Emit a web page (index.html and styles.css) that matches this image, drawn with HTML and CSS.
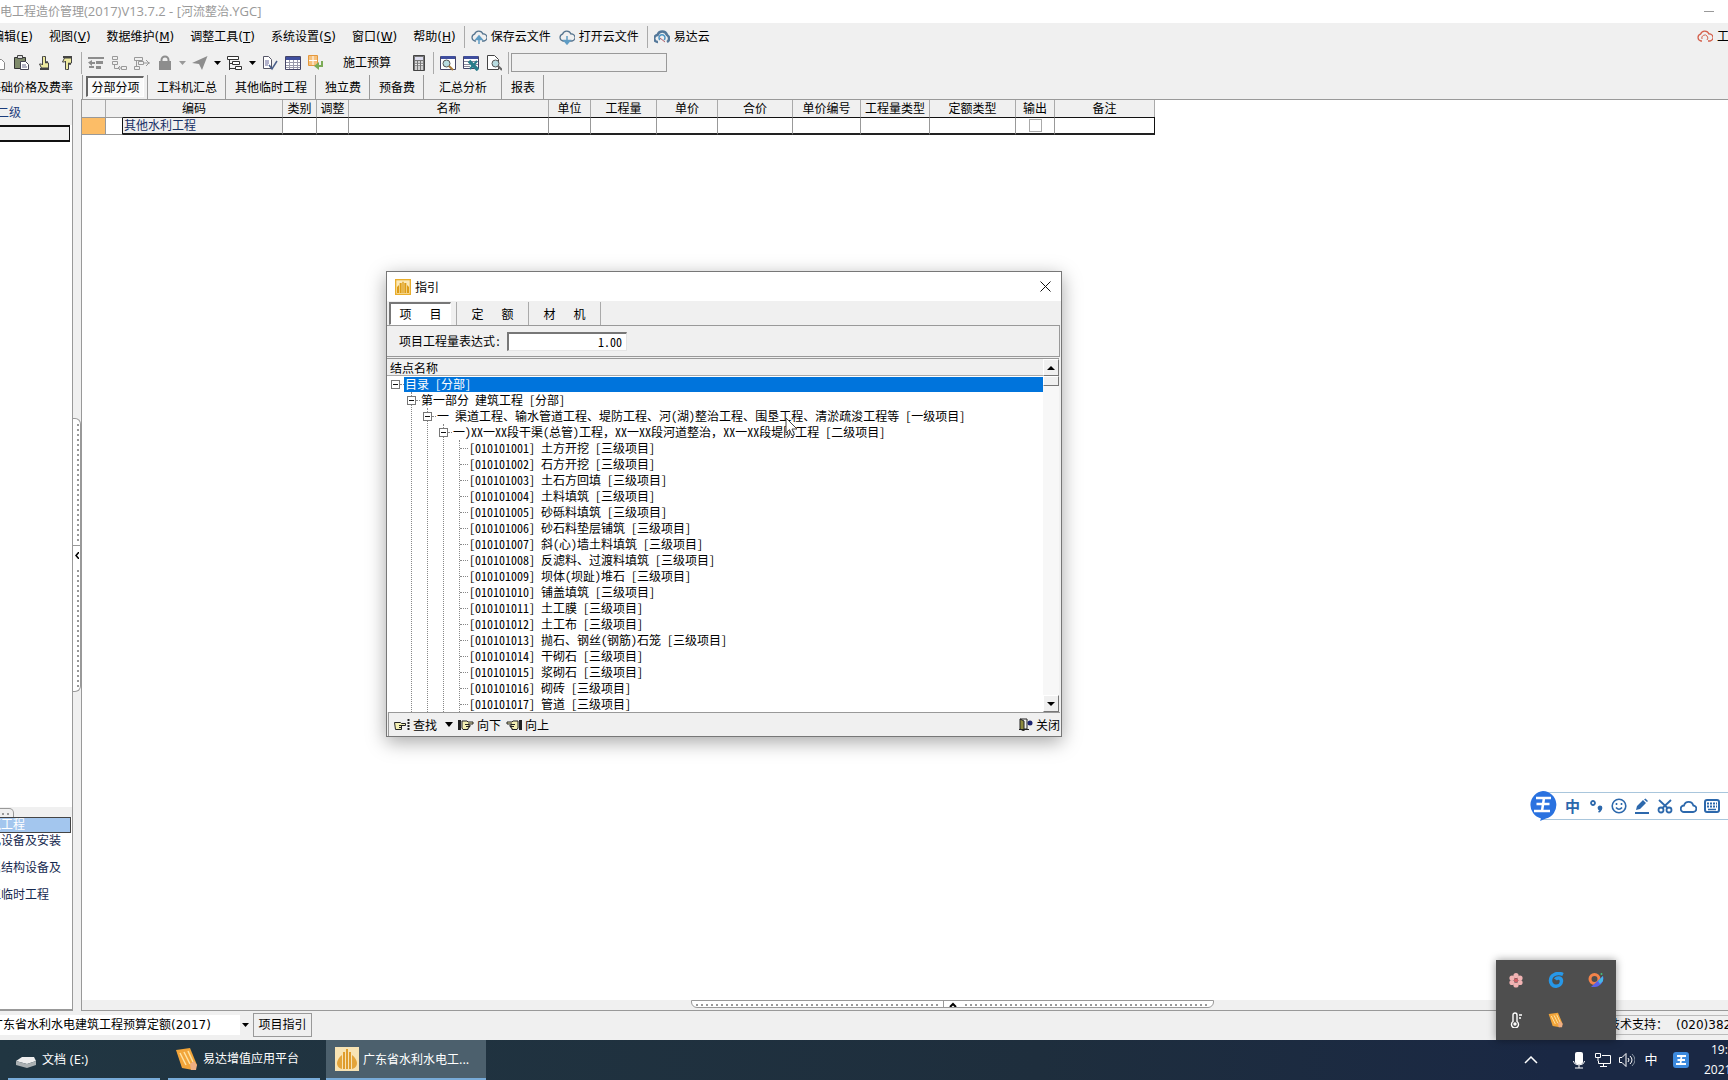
FILE: index.html
```html
<!DOCTYPE html>
<html lang="zh-CN">
<head>
<meta charset="utf-8">
<title>水利水电工程造价管理(2017)V13.7.2 - [河流整治.YGC]</title>
<link rel="stylesheet" href="styles.css">
</head>
<body>
<svg class="defs" aria-hidden="true">
  <symbol id="cloud" viewBox="0 0 16 16"><path d="M5 12H4a3.500 3.500 0 0 1-.5-6.800A4.500 4.500 0 0 1 12 5a3.500 3.500 0 0 1 1 7h-2" fill="none" stroke="currentColor" stroke-width="1.300"/></symbol>
  <symbol id="hand" viewBox="0 0 16 12"><path d="M0 1h3v10H0z" fill="#222"/><path d="M4 2h5l1 1h5v2h-5v1h2v1.500h-1V9h-1v1.500H5L4 9z" fill="#f4f0b4" stroke="#222"/><path d="M7 5.500h4M8 7.500h3" stroke="#222"/></symbol>
  <symbol id="point" viewBox="0 0 14 16"><path d="M6.500 1.500h2V8h1V6.500h1V8h1v5h-7l-2-4h2l1 1V1.500z" fill="#eeeaa0" stroke="#444"/><path d="M3 13h9v2H3z" fill="#444"/></symbol>
  <symbol id="logo" viewBox="0 0 24 24"><path d="M0 0h24v24H0z" fill="#f7e3b4"/><path d="M7 8v14c-4-1-5-4-5-6s2-6 5-8zM17 8v14c4-1 5-4 5-6s-2-6-5-8z" fill="#e3a43a"/><path d="M8 5h2v17H8zM11 2h2v20h-2zM14 5h2v17h-2z" fill="#df9c2d"/></symbol>
  <symbol id="card" viewBox="0 0 24 24"><path d="M1 3L15 1l7 17-4 5L7 21z" fill="#f2a53a"/><path d="M5 6l6 12M9 5l6 12M13 4l5 11" stroke="#ffe2a0" stroke-width="1.500"/><path d="M15 17l4-3 3 4-1 5h-5z" fill="#efae83"/></symbol>
  <symbol id="wang" viewBox="0 0 16 16"><rect width="16" height="16" rx="3" fill="#3d8ade"/><path d="M4 4h9M4.500 8h7.500M3 12h10M8.500 4L7.500 12" stroke="#fff" stroke-width="1.800"/></symbol>
</svg>

<header class="titlebar">
  <h1>电工程造价管理<span class="latin">(2017)V13.7.2 - [</span>河流整治<span class="latin">.YGC]</span></h1>
  <button class="minimise" aria-label="最小化"></button>
</header>

<nav class="menubar">
  <button><span>编辑(<u>E</u>)</span></button>
  <button><span>视图(<u>V</u>)</span></button>
  <button><span>数据维护(<u>M</u>)</span></button>
  <button><span>调整工具(<u>T</u>)</span></button>
  <button><span>系统设置(<u>S</u>)</span></button>
  <button><span>窗口(<u>W</u>)</span></button>
  <button><span>帮助(<u>H</u>)</span></button>
  <div class="cloud-tools">
    <button><svg width="16" height="16"><use href="#cloud"/><path d="M8 15V8M5 10.500L8 7l3 3.500z" stroke="#5f9cc4" stroke-width="1.500" fill="#5f9cc4"/></svg>保存云文件</button>
    <button><svg width="16" height="16"><use href="#cloud"/><path d="M8 7v6M5 11.500L8 15l3-3.500z" stroke="#5f9cc4" stroke-width="1.500" fill="#5f9cc4"/></svg>打开云文件</button>
  </div>
  <div class="cloud-tools">
    <button><svg width="16" height="16"><path d="M4 13a3.500 3.500 0 0 1-.5-7A5 5 0 0 1 13 6a4 4 0 0 1 0 7" fill="none" stroke="#54789a" stroke-width="2.500"/><path d="M6 11a3 3 0 1 1 4 0" fill="none" stroke="#4d94c4" stroke-width="1.500"/><path d="M6 9l5 4" stroke="#b25c67"/></svg>易达云</button>
  </div>
  <button class="account"><svg width="16" height="16"><use href="#cloud"/><path d="M5 10a3 3 0 1 1 5 1" fill="none" stroke="currentColor"/></svg>工具</button>
</nav>

<div class="toolbar">
  <button aria-label="复制"><svg width="16" height="16" fill="#fff" stroke="#888"><path d="M2.500 1.500h6v9h-6zM6.500 4.500h5l3 3v7h-8z"/></svg></button>
  <button aria-label="粘贴"><svg width="16" height="16"><path d="M1.500 2.500h11v11h-11z" fill="#7e8a6a" stroke="#333"/><path d="M4.500.5h5v3h-5z" fill="#ddd" stroke="#444"/><path d="M7.500 6.500h5l3 3v5h-8z" fill="#fff" stroke="#445"/><path d="M9 10h4M9 12h5" stroke="#668"/></svg></button>
  <button aria-label="上移"><svg width="14" height="16"><use href="#point"/></svg></button>
  <button aria-label="下移"><svg class="flip-v" width="14" height="16"><use href="#point"/></svg></button>
  <span class="sep"></span>
  <button aria-label="升级"><svg width="16" height="16" fill="#8d8d8d"><path d="M0 2h16v2H0zM8 6h7v3H8zM8 11h5v3H8zM1 11h5v2H1zM0 7.500L4 5v2h3v2H4v2z"/></svg></button>
  <button aria-label="插入子项"><svg width="16" height="16" fill="none" stroke="#999"><path d="M1.500 1.500h5v3h-5zM1.500 6.500h5v3h-5zM3.500 10v3.500H7M10.500 11.500h5v3h-5zM10 13H7l2-2M7 13l2 2"/></svg></button>
  <button aria-label="插入"><svg width="16" height="16" fill="none" stroke="#999"><path d="M.5 2.500h8v3h-8zM4.500 6.500h5v3h-5zM.5 11.500h5v3h-5zM2.500 6v5M10 8h6M12 5l3 3-3 3"/></svg></button>
  <button aria-label="锁定"><svg width="14" height="16"><path d="M3.500 7V5a3.500 3.500 0 0 1 7 0v2" fill="none" stroke="#8d8d8d" stroke-width="2"/><path d="M1 6h12v9H1z" fill="#8d8d8d"/></svg></button>
  <button class="drop" aria-label="锁定选项"><svg width="7" height="4"><path d="M0 0h7L3.500 4z" fill="#999"/></svg></button>
  <button aria-label="定位"><svg width="16" height="16"><path d="M15.500 1L0 8l7 1 3 6z" fill="#8d8d8d"/></svg></button>
  <button class="drop" aria-label="定位选项"><svg width="7" height="4"><path d="M0 0h7L3.500 4z"/></svg></button>
  <button aria-label="层级"><svg width="16" height="16" fill="#fff" stroke="#333"><path d="M.5 1.500h11v3H.5zM5.500 6.500h7v3h-7zM8.500 11.500h6v3h-6zM2.500 5v10M2.500 8.500h3M2.500 13.500h6"/></svg></button>
  <button class="drop" aria-label="层级选项"><svg width="7" height="4"><path d="M0 0h7L3.500 4z"/></svg></button>
  <button aria-label="检查"><svg width="16" height="16" fill="none"><path d="M1.500 1.500h5l3 3v9h-8z" fill="#fff" stroke="#556"/><path d="M3 6h4M3 8h4M3 10h3" stroke="#669"/><path d="M7 10l3 4 5-8" stroke="#4a5f8a" stroke-width="1.500"/></svg></button>
  <button aria-label="表格"><svg width="16" height="16"><path d="M.5 1.500h15v13H.5z" fill="#fff" stroke="#446"/><path d="M1 2h14v3H1z" fill="#3f4e9e"/><path d="M1 7.500h14M1 10.500h14M1 12.500h14M4.500 5v9M8.500 5v9M12.500 5v9" stroke="#99a"/></svg></button>
  <button aria-label="转换"><svg width="16" height="16"><path d="M.5.500h9v10h-9z" fill="#f6c17d" stroke="#e4983c"/><path d="M5 1v9M1 5.500h8" stroke="#fff"/><path d="M15 6v6h-4v3l-5-4 5-4v3h2V6z" fill="#7bab56"/></svg></button>
  <button class="wide">施工预算</button>
  <button aria-label="计算器"><svg width="12" height="16"><path d="M.5.5h11v15H.5z" fill="#777" stroke="#444"/><path d="M2 2h8v3H2z" fill="#dde"/><path d="M2 7h8M2 9.500h8M2 12h8M2 14h8" stroke="#eee" stroke-width="1.500" stroke-dasharray="2 1"/></svg></button>
  <span class="sep"></span>
  <button aria-label="查看"><svg width="16" height="16"><path d="M.5 1.500h15v13H.5z" fill="#fff" stroke="#446"/><path d="M1 1h14v3H1z" fill="#3f4e9e"/><circle cx="6.500" cy="8.500" r="3.500" fill="#b8dce0" stroke="#555"/><path d="M9 11l4 4" stroke="#a5793a" stroke-width="2"/></svg></button>
  <button aria-label="导出表格"><svg width="16" height="16"><path d="M.5 1.500h15v12H.5z" fill="#fff" stroke="#446"/><path d="M1 1h14v3H1z" fill="#3f4e9e"/><path d="M1 6.500h6M1 9.500h6M1 11.500h6M8 6.500h7M8 9.500h7" stroke="#889"/><path d="M6 6l9 9" stroke="#277c8a" stroke-width="3.500"/><path d="M14 6l-7 8" stroke="#277c8a" stroke-width="2"/></svg></button>
  <button aria-label="预览"><svg width="16" height="16"><path d="M1.500.5h7l4 4v10h-11z" fill="#fff" stroke="#444"/><circle cx="9.500" cy="8.500" r="3.500" fill="#b8dce0" stroke="#555"/><path d="M12 11l4 4" stroke="#666" stroke-width="2"/></svg></button>
  <span class="sep"></span>
  <input class="quick" type="text" aria-label="快速查找">
</div>

<nav class="tabs">
  <button class="first">基础价格及费率</button>
  <button class="active"><span>分部分项</span></button>
  <button>工料机汇总</button>
  <button>其他临时工程</button>
  <button>独立费</button>
  <button>预备费</button>
  <button class="roomy">汇总分析</button>
  <button>报表</button>
</nav>

<div class="workspace">
  <aside class="sidebar">
    <div class="level">二级</div>
    <div class="current"></div>
    <div class="blank"></div>
    <div class="side-split"><span class="grip"></span></div>
    <ul class="parts">
      <li class="selected"><a href="#p1">建筑工程</a></li>
      <li><a href="#p2">机电设备及安装</a></li>
      <li><a href="#p3">金属结构设备及</a></li>
      <li><a href="#p4">施工临时工程</a></li>
    </ul>
  </aside>
  <div class="v-split"><div class="v-grip"><i></i><button aria-label="收起"><svg width="4" height="7"><path d="M4 0L1 3.500 4 7" fill="none" stroke="#000" stroke-width="1.500"/></svg></button><i></i></div></div>
  <main class="content">
    <div class="sheet">
      <table class="grid">
        <colgroup><col class="c-mark"><col class="c-pad"><col class="c-code"><col class="c-kind"><col class="c-adj"><col class="c-name"><col class="c-unit"><col class="c-qty"><col class="c-price"><col class="c-total"><col class="c-no"><col class="c-qtype"><col class="c-qtype2"><col class="c-out"><col class="c-note"></colgroup>
        <thead><tr><th></th><th colspan="2">编码</th><th>类别</th><th>调整</th><th>名称</th><th>单位</th><th>工程量</th><th>单价</th><th>合价</th><th>单价编号</th><th>工程量类型</th><th>定额类型</th><th>输出</th><th>备注</th></tr></thead>
        <tbody><tr><td class="mark"></td><td class="pad"></td><td class="code">其他水利工程</td><td></td><td></td><td></td><td></td><td></td><td></td><td></td><td></td><td></td><td></td><td class="out"><input type="checkbox" aria-label="输出"></td><td class="last"></td></tr></tbody>
      </table>
    </div>
    <div class="h-split"><div class="h-grip"><i></i><button aria-label="展开"><svg width="8" height="5"><path d="M1 5l3-3 3 3" fill="none" stroke="#000" stroke-width="2"/></svg></button><i></i></div></div>
  </main>
</div>

<footer class="status">
  <div class="quota">
    <select aria-label="定额"><option>广东省水利水电建筑工程预算定额(2017)</option></select>
    <svg width="7" height="4"><path d="M0 0h7L3.500 4z"/></svg>
  </div>
  <button class="guide">项目指引</button>
  <div class="support"><span>技术支持：</span><span>(020)38210</span></div>
</footer>

<div class="taskbar">
  <button class="task drive"><svg width="22" height="24"><path d="M1 14l6-4h12l2 4-9 3z" fill="#eee"/><path d="M1 14l11 3 9-3v4l-9 3-11-3z" fill="#aab0b2"/></svg><span>文档 <span class="latin">(E:)</span></span></button>
  <button class="task"><svg width="24" height="24"><use href="#card"/></svg><span>易达增值应用平台</span></button>
  <button class="task open"><svg width="24" height="24"><use href="#logo"/></svg><span>广东省水利水电工<span class="latin">...</span></span></button>
  <div class="tray">
    <button class="chevron" aria-label="显示隐藏的图标"><svg width="14" height="8"><path d="M1 7l6-6 6 6" fill="none" stroke="#fff" stroke-width="1.500"/></svg></button>
    <svg width="16" height="18" viewBox="0 0 16 18"><rect x="4" y="1" width="8" height="12" rx="2" fill="#fff"/><path d="M2.500 10c0 5 11 5 11 0M8 14v3M4 17h8" fill="none" stroke="#fff"/></svg>
    <svg width="16" height="16" fill="none" stroke="#fff"><path d="M7 3.500h8.500v8H3.500V9M8.500 12v3M5 14.500h7M.5 1.500h5v4h-5zM3 6v3"/></svg>
    <svg width="16" height="16" fill="none" stroke="#fff"><path d="M.5 5.500H3l4-4v13l-4-4H.5zM9 6q2 2 0 4M11 4q4 4 0 8"/><path d="M13 2q6 6 0 12" stroke="#8892a0"/></svg>
    <span class="lang">中</span>
    <svg width="16" height="16"><use href="#wang"/></svg>
    <div class="clock"><span>19:04</span><span>2021</span></div>
  </div>
</div>

<section class="dialog" role="dialog" aria-label="指引">
  <header class="dlg-title">
    <svg width="16" height="16" viewBox="0 0 24 24"><path d="M0 0h24v24H0z" fill="#e9ae2c"/><path d="M2 2h20v20H2z" fill="#fbe9b9"/><path d="M3 12l3-3v12H3zM21 12l-3-3v12h3zM7 6h3v15H7zM11 4h2v17h-2zM14 6h3v15h-3z" fill="#dd9c16"/></svg>
    <h2>指引</h2>
    <button aria-label="关闭窗口"><svg width="11" height="11"><path d="M.5.500l10 10M10.500.5l-10 10" stroke="#111"/></svg></button>
  </header>
  <nav class="dlg-tabs">
    <button class="active"><span>项</span><span>目</span></button>
    <button><span>定</span><span>额</span></button>
    <button><span>材</span><span>机</span></button>
  </nav>
  <div class="expr">
    <label for="expr">项目工程量表达式:</label>
    <input id="expr" type="text" value="1.00">
  </div>
  <div class="tree-box">
    <div class="tree-pane">
      <div class="tree-head">结点名称</div>
      <ul class="tree">
        <li><div class="node sel"><b></b><i></i><span>目录 [分部]</span></div>
          <ul><li><div class="node"><b></b><i></i><span>第一部分 建筑工程 [分部]</span></div>
            <ul><li><div class="node"><b></b><i></i><span>一 渠道工程<em>、</em>输水管道工程<em>、</em>堤防工程<em>、</em>河(湖)整治工程<em>、</em>围垦工程<em>、</em>清淤疏浚工程等 [一级项目]</span></div>
              <ul><li><div class="node"><b></b><i></i><span>一)XX<em>一</em>XX段干渠(总管)工程<em>，</em>XX<em>一</em>XX段河道整治<em>，</em>XX<em>一</em>XX段堤防工程 [二级项目]</span></div>
                <ul>
                  <li class="node"><i></i><span>[010101001] 土方开挖 [三级项目]</span></li>
                  <li class="node"><i></i><span>[010101002] 石方开挖 [三级项目]</span></li>
                  <li class="node"><i></i><span>[010101003] 土石方回填 [三级项目]</span></li>
                  <li class="node"><i></i><span>[010101004] 土料填筑 [三级项目]</span></li>
                  <li class="node"><i></i><span>[010101005] 砂砾料填筑 [三级项目]</span></li>
                  <li class="node"><i></i><span>[010101006] 砂石料垫层铺筑 [三级项目]</span></li>
                  <li class="node"><i></i><span>[010101007] 斜(心)墙土料填筑 [三级项目]</span></li>
                  <li class="node"><i></i><span>[010101008] 反滤料<em>、</em>过渡料填筑 [三级项目]</span></li>
                  <li class="node"><i></i><span>[010101009] 坝体(坝趾)堆石 [三级项目]</span></li>
                  <li class="node"><i></i><span>[010101010] 铺盖填筑 [三级项目]</span></li>
                  <li class="node"><i></i><span>[010101011] 土工膜 [三级项目]</span></li>
                  <li class="node"><i></i><span>[010101012] 土工布 [三级项目]</span></li>
                  <li class="node"><i></i><span>[010101013] 抛石<em>、</em>钢丝(钢筋)石笼 [三级项目]</span></li>
                  <li class="node"><i></i><span>[010101014] 干砌石 [三级项目]</span></li>
                  <li class="node"><i></i><span>[010101015] 浆砌石 [三级项目]</span></li>
                  <li class="node"><i></i><span>[010101016] 砌砖 [三级项目]</span></li>
                  <li class="node"><i></i><span>[010101017] 管道 [三级项目]</span></li>
                </ul></li></ul></li></ul></li></ul></li>
      </ul>
    </div>
    <div class="scroll">
      <button aria-label="向上滚动"><svg width="8" height="4"><path d="M0 4h8L4 0z"/></svg></button>
      <div class="thumb"></div>
      <button class="down" aria-label="向下滚动"><svg width="8" height="4"><path d="M0 0h8L4 4z"/></svg></button>
    </div>
  </div>
  <footer class="dlg-foot">
    <button><svg width="16" height="12"><path d="M.5 3.500h6l1 1h4v2h-4v4h-6z" fill="#f4f0b4" stroke="#222"/><path d="M5 6.500h4M5 8.500h3" stroke="#222"/><path d="M14.500 0v12" stroke="#222" stroke-width="2" stroke-dasharray="2 1"/></svg>查找</button>
    <button class="more" aria-label="查找选项"><svg width="8" height="5"><path d="M0 0h8L4 5z"/></svg></button>
    <button><svg width="16" height="12"><use href="#hand"/></svg>向下</button>
    <button><svg class="flip-h" width="16" height="12"><use href="#hand"/></svg>向上</button>
    <button class="close"><svg width="14" height="13"><path d="M1 1l4 2v10l-4-2z" fill="#8d8a3e" stroke="#222"/><path d="M1 1h7v10H5M0 11.500h10" fill="none" stroke="#222"/><circle cx="11" cy="5" r="2.500" fill="#1d2470"/></svg>关闭</button>
  </footer>
</section>

<svg class="cursor" width="13" height="20"><path d="M1 1v15l3.500-3.500L7 18.500l2.500-1L7 12h5z" fill="#fff" stroke="#444"/></svg>

<div class="ime">
  <svg class="ime-logo" width="28" height="30"><path d="M14 0a14 14 0 0 1 3 27.500L11 30l1-2.500A14 14 0 0 1 14 0z" fill="#2a72e0"/><path d="M7 7h15M7.500 13h13M5 20h16M15 7l-2 13" stroke="#fff" stroke-width="2.500"/></svg>
  <span class="zh">中</span>
  <svg width="16" height="16" fill="none" stroke="currentColor" stroke-width="1.800"><circle cx="5" cy="5" r="2"/><circle cx="12" cy="10" r="1.500" fill="currentColor"/><path d="M13 10q0 3-2.500 4"/></svg>
  <svg width="16" height="16" fill="none" stroke="currentColor" stroke-width="1.600"><circle cx="8" cy="8" r="6.800"/><path d="M5 9.500q3 3.500 6 0M5.500 5v2M10.500 5v2"/></svg>
  <svg width="16" height="16" fill="currentColor"><path d="M2 12l1-4 6-6 3 3-6 6zM10 1.500l1.500-1L14 3l-1 1zM1 14h14v2H1z"/></svg>
  <svg width="16" height="16" fill="none" stroke="currentColor" stroke-width="1.800"><circle cx="4" cy="12" r="2.500"/><circle cx="12" cy="12" r="2.500"/><path d="M5.500 10L14 2M10.500 10L2 2"/></svg>
  <svg width="17" height="16" fill="none" stroke="currentColor" stroke-width="1.800"><path d="M4 14a3.200 3.200 0 0 1 0-6.500 4.800 4.800 0 0 1 9.300 0A3.200 3.200 0 0 1 13 14z"/></svg>
  <svg width="16" height="16"><rect x="1" y="2" width="14" height="12" rx="2" fill="none" stroke="currentColor" stroke-width="2"/><path d="M3 5.500h10M3 8.500h10" stroke="currentColor" stroke-width="2" stroke-dasharray="2 1"/><path d="M4 11.500h8" stroke="currentColor" stroke-width="1.500"/></svg>
</div>

<div class="tray-popup">
  <svg width="16" height="16"><g fill="#f1b3b3"><circle cx="8" cy="3.500" r="2.600"/><circle cx="12" cy="6" r="2.600"/><circle cx="12" cy="10.500" r="2.600"/><circle cx="8" cy="13" r="2.600"/><circle cx="4" cy="10.500" r="2.600"/><circle cx="4" cy="6" r="2.600"/></g><circle cx="8" cy="8.200" r="2" fill="#d35f66"/></svg>
  <svg width="16" height="16" fill="none"><path d="M15 2.500C9 0 2.500 3 2.500 8.500a5.500 5.500 0 0 0 11 .500c0-3.500-4.500-4-6-1.500" stroke="#2798e8" stroke-width="3.500"/></svg>
  <svg width="16" height="16"><circle cx="6.500" cy="7" r="4.500" fill="none" stroke="#f3834a" stroke-width="3"/><path d="M3 15L15 4c2 5-3 11-8 11z" fill="#5a62e8"/><path d="M10 9l5-5v5l-3 3z" fill="#45b7e8"/><circle cx="13.500" cy="2" r="1" fill="#44c07b"/></svg>
  <svg width="16" height="16" fill="none" stroke="#fff" stroke-width="1.400"><path d="M5 9.500V3a2 2 0 0 1 4 0v6.500a3.500 3.500 0 1 1-4 0zM11 3h3M11 6h2"/><circle cx="7" cy="12" r="1" fill="#fff"/></svg>
  <svg width="16" height="16"><use href="#card"/></svg>
</div>
</body>
</html>
```
FILE: styles.css
```css
* { box-sizing: border-box; }

body {
  margin: 0;
  height: 100vh;
  display: flex;
  flex-direction: column;
  overflow: hidden;
  position: relative;
  background: #f0f0f0;
  color: #000;
  font: 12px/16px "DejaVu Sans", "Noto Sans CJK SC", sans-serif;
}

button, input, select { font: inherit; color: inherit; }
button { background: none; border: 0; padding: 0; white-space: nowrap; }
ul { list-style: none; margin: 0; padding: 0; }
h1, h2 { margin: 0; font-size: 12px; font-weight: normal; white-space: nowrap; }
svg { flex: none; }
.defs { display: none; }
.latin { font-family: "Open Sans", sans-serif; font-size: 13px; }
.flip-v { transform: scaleY(-1); }
.flip-h { transform: scaleX(-1); }

/* title, menu and tool rows */
.titlebar {
  flex: none;
  height: 23px;
  display: flex;
  align-items: center;
  justify-content: space-between;
  background: #fff;
  color: #999;
}
.minimise { width: 10px; height: 1px; background: #999; margin-right: 14px; }

.menubar {
  flex: none;
  height: 27px;
  display: flex;
  align-items: center;
  gap: 16px;
  margin-left: -8px;
  padding-top: 1px;
  overflow: hidden;
}
.menubar button { display: flex; align-items: center; gap: 4px; flex: none; }
.cloud-tools {
  display: flex;
  align-items: center;
  gap: 8px;
  height: 22px;
  padding-left: 6px;
  border-left: 1px solid #aaa;
  margin-left: -8px;
  color: #57758f;
}
.cloud-tools button { color: #000; }
.cloud-tools svg { color: #57758f; }
.menubar .account { margin-left: auto; margin-right: -13px; }
.account svg { color: #d4604c; }

.toolbar {
  flex: none;
  height: 25px;
  display: flex;
  align-items: center;
  margin-left: -14px;
}
.toolbar button {
  width: 23px;
  height: 22px;
  flex: none;
  display: flex;
  align-items: center;
  justify-content: center;
}
.toolbar .drop { width: 12px; }
.toolbar .wide { width: 80px; }
.sep { flex: none; width: 6px; height: 22px; background: linear-gradient(#aaa, #aaa) center / 1px 100% no-repeat; }
.quick { width: 156px; height: 19px; border: 1px solid #999; background: #f0f0f0; padding: 0 4px; }

.tabs { flex: none; height: 24px; display: flex; margin-left: -11px; }
.tabs button { padding: 2px 8px 0 9px; border-right: 1px solid #999; }
.tabs .first { width: 94px; padding: 2px 9px 0 0; text-align: left; }
.tabs .active { width: 65px; padding: 1px 3px 2px; }
.tabs .active span {
  display: block;
  line-height: 20px;
  height: 21px;
  border: 1px solid #fff;
  border-top: 2px solid #666;
  border-left: 2px solid #666;
  background: #fafafa;
}
.tabs .roomy { padding: 2px 14px 0 15px; }

/* left pane */
.workspace { flex: 1; min-height: 0; display: flex; }
.sidebar { flex: none; width: 73px; display: flex; flex-direction: column; border-top: 1px solid #ccc; border-right: 1px solid #999; border-bottom: 2px solid #999; overflow: hidden; background: #fff; }
.level { height: 25px; line-height: 26px; margin-left: -3px; background: #f0f0f0; color: #1c3c7c; }
.current { height: 17px; margin-right: 2px; border: 1px solid #111; border-width: 2px 1px 2px 0; background: #f0f0f0; }
.blank { flex: 1; }
.side-split { height: 10px; background: #f0f0f0; overflow: hidden; }
.grip { display: block; width: 14px; height: 10px; margin-top: 1px; border: 1px solid #999; border-left: 0; border-top-right-radius: 5px; background: repeating-linear-gradient(90deg, #999 0 2px, transparent 2px 5px) 2px 4px / 10px 2px no-repeat; }
.parts { height: 192px; }
.parts li { height: 27px; line-height: 16px; }
.parts a { color: #16294f; text-decoration: none; white-space: nowrap; margin-left: -23px; }
.parts .selected { height: 16px; line-height: 14px; margin-right: 1px; border: 1px solid #444; border-width: 1px 1px 1px 0; background: #a3c6ee; }
.parts .selected a { color: #fff; }

.v-split { flex: none; width: 9px; display: flex; align-items: center; border-right: 1px solid #999; }
.v-grip { width: 8px; height: 274px; display: flex; flex-direction: column; border: 1px solid #999; border-left: 0; border-radius: 0 6px 6px 0; background: #fff; }
.v-grip i { flex: 1; margin: 5px 0 3px; background: repeating-linear-gradient(#999 0 2px, transparent 2px 5px) 4px 0 / 2px 100% no-repeat; }
.v-grip button { height: 20px; display: flex; align-items: center; justify-content: center; border-top: 1px solid #999; }

/* sheet */
.content { flex: 1; min-width: 0; display: flex; flex-direction: column; border-top: 1px solid #999; overflow: hidden; }
.sheet { flex: 1; background: #fff; }
.h-split { flex: none; height: 11px; display: flex; justify-content: center; margin-right: -94px; border-bottom: 1px solid #999; }
.h-grip { width: 523px; height: 8px; display: flex; border: 1px solid #999; border-radius: 0 0 6px 6px; background: #fff; }
.h-grip i { flex: 1; margin: 0 4px; background: repeating-linear-gradient(90deg, #999 0 2px, transparent 2px 5px) 0 3px / 100% 2px no-repeat; }
.h-grip button { width: 18px; display: flex; align-items: center; justify-content: center; border-left: 1px solid #999; }

.grid { table-layout: fixed; width: 1073px; border-collapse: separate; border-spacing: 0; }
.c-mark { width: 24px; } .c-pad { width: 17px; } .c-code { width: 160px; }
.c-kind { width: 34px; } .c-adj { width: 32px; } .c-name { width: 200px; }
.c-unit { width: 42px; } .c-qty { width: 66px; } .c-price { width: 61px; }
.c-total { width: 75px; } .c-no { width: 68px; } .c-qtype { width: 69px; }
.c-qtype2 { width: 86px; } .c-out { width: 39px; } .c-note { width: 100px; }
.grid th { height: 17px; padding: 0; font-weight: normal; line-height: 16px; background: #f0f0f0; border-right: 1px solid #aaa; white-space: nowrap; }
.grid td { height: 18px; padding: 0; line-height: 14px; border-top: 1px solid #111; border-bottom: 2px solid #222; border-right: 1px solid #999; }
.grid .mark { background: #fcbd67; border-top: 1px solid #999; border-bottom: 1px solid #999; }
.grid .pad { border-top: 1px solid #999; border-bottom: 1px solid #999; border-right: 1px solid #111; }
.grid .code { background: #f0f0f0; color: #183066; padding-left: 1px; }
.grid .last { border-right: 1px solid #111; }
.out { text-align: center; }
.out input { appearance: none; display: block; width: 13px; height: 13px; margin: 0 auto; border: 1px solid #aaa; background: #fff; }

/* status and task bars */
.status { flex: none; height: 29px; display: flex; align-items: center; padding-bottom: 1px; }
.quota { display: flex; align-items: center; justify-content: space-between; width: 249px; height: 20px; margin-right: 4px; overflow: hidden; background: linear-gradient(90deg, #fff 240px, #f0f0f0 240px); }
.quota select { appearance: none; flex: none; width: 250px; height: 20px; margin-left: -9px; padding: 0; border: 0; background: transparent; }
.guide { width: 59px; height: 24px; border: 1px solid #999; }
.support { display: flex; gap: 8px; width: 121px; height: 20px; margin-left: auto; align-items: center; border: 1px solid #bbb; border-right: 0; overflow: hidden; white-space: nowrap; }

.taskbar { flex: none; height: 40px; display: flex; color: #fff; background: linear-gradient(90deg, #213642, #1e2e3d 60%, #1a2844 90%); overflow: hidden; }
.task { display: flex; align-items: center; gap: 4px; width: 152px; height: 40px; margin-left: 8px; padding: 0 0 0 7px; border-bottom: 2px solid #78abd8; }
.task.drive { gap: 5px; }
.task.open { width: 160px; margin-left: 6px; padding-left: 9px; background: #4c606d; }
.tray { display: flex; align-items: center; gap: 8px; margin-left: auto; }
.chevron { display: flex; margin-right: 25px; }
.lang { font-size: 13px; width: 16px; margin-right: 6px; text-align: center; }
.clock { display: flex; flex-direction: column; width: 31px; padding-left: 7px; font: 12px/20px "Open Sans", sans-serif; white-space: nowrap; }
.clock span:first-child { padding-left: 7px; }

/* guide dialog */
.dialog {
  position: absolute;
  left: 386px;
  top: 271px;
  width: 676px;
  display: flex;
  flex-direction: column;
  border: 1px solid #777;
  background: #f0f0f0;
  box-shadow: 0 5px 18px rgba(0, 0, 0, .35);
  font-family: "Noto Sans CJK SC", sans-serif;
  font-feature-settings: "hwid";
}
.dlg-title { display: flex; align-items: center; height: 29px; padding: 0 10px 0 8px; gap: 4px; background: #fff; }
.dlg-title button { display: flex; margin-left: auto; }
.dlg-tabs { display: flex; height: 24px; padding: 1px 0 0 2px; }
.dlg-tabs button { display: flex; align-items: center; justify-content: center; gap: 18px; width: 72px; border-right: 1px solid #aaa; }
.dlg-tabs .active { width: 62px; margin-right: 5px; border: 1px solid #fff; border-top: 2px solid #777; border-left: 2px solid #777; background: #fff; }
.dlg-tabs .active + button { border-left: 1px solid #aaa; width: 73px; }
.expr { display: flex; align-items: center; gap: 6px; height: 32px; margin-right: 1px; padding-left: 12px; border: 1px solid #999; border-left: 0; }
.expr label { width: 102px; white-space: nowrap; }
.expr input { width: 120px; height: 19px; padding: 0 4px; text-align: right; border: 1px solid #e4e4e4; border-top: 2px solid #777; border-left: 2px solid #777; background: #fff; }

.tree-box { display: flex; margin: 1px 2px 0 0; border-top: 1px solid #999; background: #fff; }
.tree-pane { flex: 1; min-width: 0; }
.tree-head { height: 17px; padding-left: 3px; line-height: 17px; background: #f0f0f0; border-bottom: 1px solid #aaa; }
.tree { padding-left: 9px; }
.tree ul { margin-left: 15px; border-left: 1px dotted #888; }
.node { display: flex; align-items: center; height: 16px; white-space: pre; }
.node b { width: 9px; height: 9px; margin-left: -5px; border: 1px solid #777; background: linear-gradient(#111, #111) center / 5px 1px no-repeat #fff; }
.node i { width: 8px; height: 1px; border-top: 1px dotted #888; }
.node b + i { width: 4px; }
.node span { padding-left: 1px; }
.node em { font-style: normal; font-feature-settings: normal; }
.sel span { flex: 1; height: 15px; line-height: 14px; background: #0074dc; color: #fff; }
.scroll { width: 16px; display: flex; flex-direction: column; background: #f7f7f7; }
.scroll button { display: flex; align-items: center; justify-content: center; height: 17px; border: 1px solid #fff; border-right-color: #777; border-bottom-color: #777; background: #f0f0f0; }
.thumb { height: 10px; border: 1px solid #fff; border-right-color: #777; border-bottom-color: #777; background: #f0f0f0; }
.scroll .down { margin-top: auto; }

.dlg-foot { display: flex; align-items: center; gap: 5px; height: 24px; margin: 0 1px; padding-left: 5px; border-top: 1px solid #999; border-left: 1px solid #999; }
.dlg-foot button { display: flex; align-items: center; gap: 3px; }
.dlg-foot .more { margin-left: 3px; }
.dlg-foot .close { margin-left: auto; }

/* floating items */
.cursor { position: absolute; left: 785px; top: 417px; }
.ime {
  position: absolute;
  right: 0;
  top: 792px;
  display: flex;
  align-items: center;
  gap: 7px;
  width: 186px;
  height: 28px;
  border: 1px solid #a9c6dc;
  border-width: 1px 0;
  background: #fff;
  color: #2c68ac;
}
.ime-logo { margin-left: -13px; }
.zh { width: 16px; font: bold 15px/20px "Noto Sans CJK SC", sans-serif; margin-left: 1px; }
.tray-popup {
  position: absolute;
  left: 1496px;
  bottom: 40px;
  width: 120px;
  height: 80px;
  display: grid;
  grid-template-columns: repeat(3, 1fr);
  place-items: center;
  background: #4e4e4e;
  box-shadow: 0 0 8px rgba(0, 0, 0, .4);
}
```
